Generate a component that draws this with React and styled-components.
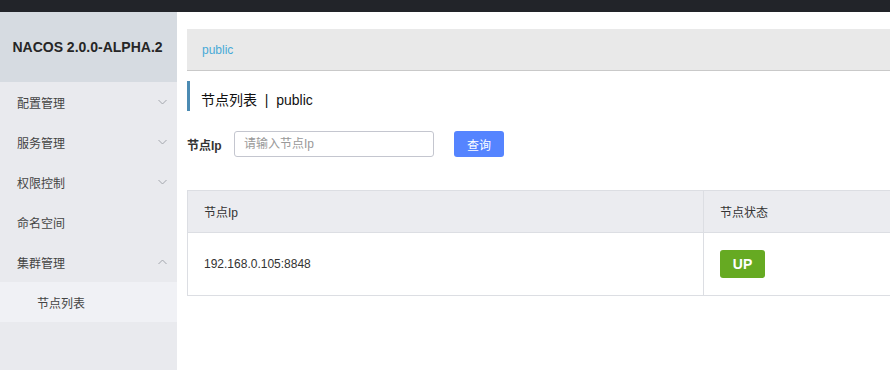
import styled, { createGlobalStyle } from "styled-components";

const GlobalStyle = createGlobalStyle`
  html, body {
    margin: 0;
    padding: 0;
    background: #ffffff;
    font-family: "Liberation Sans", Arial, "Noto Sans CJK SC", sans-serif;
    color: #333;
  }
  * { box-sizing: border-box; }
`;

const menus = [
  { name: "配置管理", arrow: "down" },
  { name: "服务管理", arrow: "down" },
  { name: "权限控制", arrow: "down" },
  { name: "命名空间" },
  { name: "集群管理", arrow: "up" },
];

const Chevron = ({ up }) => (
  <svg width="9" height="6" viewBox="0 0 9 6">
    <path
      d={up ? "M0.5 5 L4.5 1 L8.5 5" : "M0.5 1 L4.5 5 L8.5 1"}
      fill="none"
      stroke="#a3a6ad"
      strokeWidth="1"
    />
  </svg>
);

const App = () => {
  return (
    <>
      <GlobalStyle />
      <Page>
        <TopBar />
        <Body>
          <Sidebar>
            <Logo>NACOS 2.0.0-ALPHA.2</Logo>
            {menus.map((m) => (
              <MenuItem key={m.name}>
                <span>{m.name}</span>
                {m.arrow && <Chevron up={m.arrow === "up"} />}
              </MenuItem>
            ))}
            <SubItem>节点列表</SubItem>
          </Sidebar>
          <Main>
            <Breadcrumb>public</Breadcrumb>
            <PageTitle>节点列表&nbsp;&nbsp;|&nbsp;&nbsp;public</PageTitle>
            <SearchRow>
              <Label>节点Ip</Label>
              <Input placeholder="请输入节点Ip" />
              <QueryButton>查询</QueryButton>
            </SearchRow>
            <Table>
              <HeadRow>
                <Cell $first>节点Ip</Cell>
                <Cell>节点状态</Cell>
              </HeadRow>
              <BodyRow>
                <Cell $first>192.168.0.105:8848</Cell>
                <Cell>
                  <Status>UP</Status>
                </Cell>
              </BodyRow>
            </Table>
          </Main>
        </Body>
      </Page>
    </>
  );
};

const Page = styled.div`
  display: flex;
  flex-direction: column;
  width: 890px;
  height: 370px;
  overflow: hidden;
`;

const TopBar = styled.div`
  height: 12px;
  background: #222429;
  flex-shrink: 0;
`;

const Body = styled.div`
  display: flex;
  flex: 1;
`;

const Sidebar = styled.div`
  width: 177px;
  flex-shrink: 0;
  background: #e9eaee;
  display: flex;
  flex-direction: column;
`;

const Logo = styled.div`
  height: 70px;
  background: #d6dbe1;
  display: flex;
  align-items: center;
  justify-content: center;
  font-size: 14px;
  font-weight: bold;
  color: #262626;
  padding-right: 2px;
`;

const MenuItem = styled.div`
  height: 40px;
  display: flex;
  align-items: center;
  justify-content: space-between;
  padding: 0 10px 0 17px;
  font-size: 12px;
  font-family: "Noto Sans CJK SC", sans-serif;
  color: #444;
`;

const SubItem = styled.div`
  height: 40px;
  display: flex;
  align-items: center;
  padding-left: 37px;
  font-size: 12px;
  font-family: "Noto Sans CJK SC", sans-serif;
  color: #444;
  background: #f0f1f5;
`;

const Main = styled.div`
  flex: 1;
  padding: 17px 0 0 10px;
  display: flex;
  flex-direction: column;
`;

const Breadcrumb = styled.div`
  height: 42px;
  background: #e9e9e9;
  border-bottom: 1px solid #c9c9c9;
  display: flex;
  align-items: center;
  padding-left: 15px;
  font-size: 12px;
  color: #48a9d7;
`;

const PageTitle = styled.div`
  margin-top: 10px;
  height: 30px;
  border-left: 3px solid #4c8bb3;
  padding: 5px 0 0 11px;
  display: flex;
  align-items: center;
  font-size: 14px;
  font-family: "Liberation Sans", "Noto Sans CJK SC", sans-serif;
  color: #111;
`;

const SearchRow = styled.div`
  margin-top: 20px;
  display: flex;
  align-items: center;
  height: 26px;
`;

const Label = styled.span`
  font-size: 12px;
  font-weight: bold;
  color: #333;
  font-family: "Liberation Sans", "Noto Sans CJK SC", sans-serif;
  width: 47px;
`;

const Input = styled.input`
  width: 200px;
  height: 26px;
  border: 1px solid #c4c6cf;
  border-radius: 3px;
  padding: 0 9px;
  font-size: 12px;
  font-family: "Liberation Sans", "Noto Sans CJK SC", sans-serif;
  outline: none;
  &::placeholder {
    color: #999;
  }
`;

const QueryButton = styled.button`
  margin-left: 20px;
  width: 50px;
  height: 26px;
  border: none;
  border-radius: 3px;
  background: #5584ff;
  color: #fff;
  font-size: 12px;
  font-family: "Noto Sans CJK SC", sans-serif;
  padding: 0;
`;

const Table = styled.div`
  margin-top: 33px;
  border: 1px solid #dcdee3;
  border-right: none;
  width: 720px;
`;

const Row = styled.div`
  display: grid;
  grid-template-columns: 516px 1fr;
`;

const HeadRow = styled(Row)`
  height: 42px;
  background: #ebecf0;
  border-bottom: 1px solid #dcdee3;
`;

const BodyRow = styled(Row)`
  height: 62px;
  background: #fff;
`;

const Cell = styled.div`
  display: flex;
  align-items: center;
  padding-left: 16px;
  font-size: 12px;
  color: #333;
  font-family: "Liberation Sans", "Noto Sans CJK SC", sans-serif;
  border-right: ${(p) => (p.$first ? "1px solid #dcdee3" : "none")};
`;

const Status = styled.span`
  display: inline-flex;
  align-items: center;
  justify-content: center;
  width: 45px;
  height: 28px;
  background: #66aa22;
  color: #fff;
  font-weight: bold;
  font-size: 14px;
  border-radius: 3px;
`;

export default App;
